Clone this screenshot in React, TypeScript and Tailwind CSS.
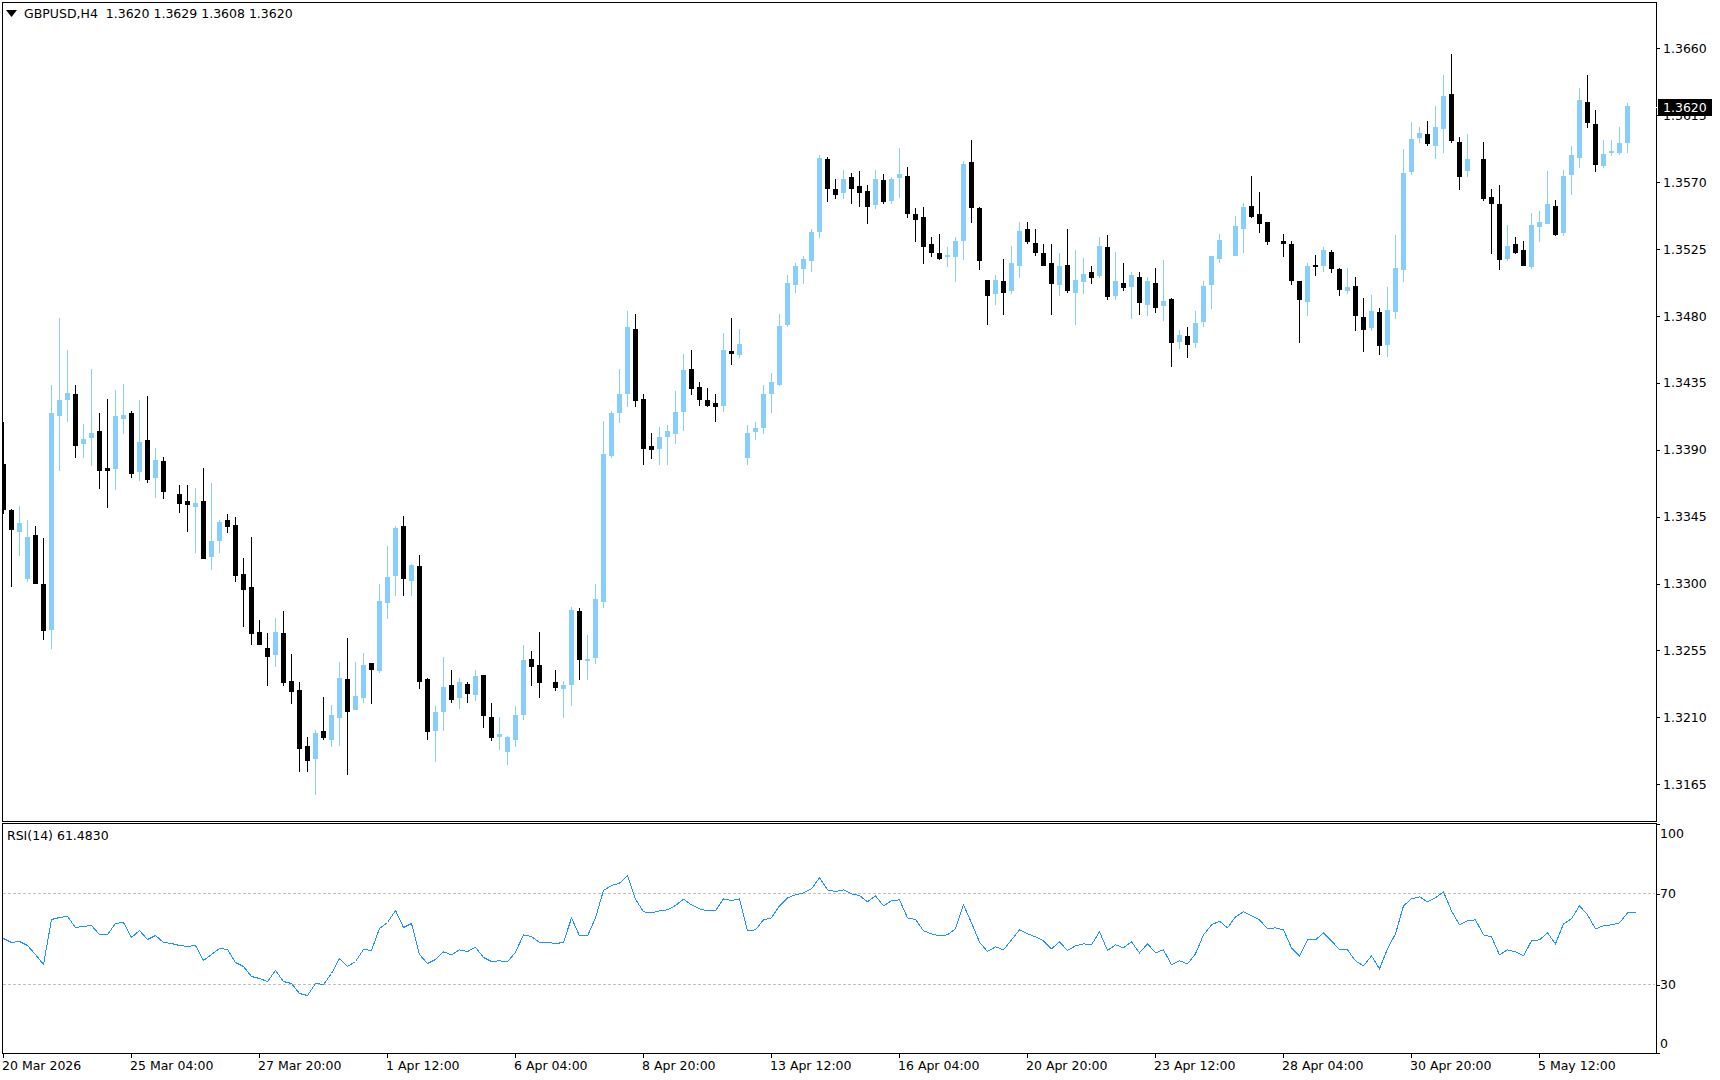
type Candle = [number, number, number, number, number] | null;

// [bull?, wick top, body top, body bottom, wick bottom], page pixels. null = no bar drawn
const CANDLES: Candle[] = [
  [0,422,464,510,514],[0,509,510,530,587],[1,506,523,532,556],[1,520,537,579,582],[0,526,535,584,584],[0,538,584,631,640],
  [1,385,413,630,649],[1,318,400,416,471],[1,350,393,400,422],[0,385,394,446,458],[1,424,439,444,458],[1,369,433,438,466],
  [0,413,431,471,489],[0,399,468,471,508],[1,390,416,469,490],[1,384,415,419,434],[0,411,413,474,478],[1,400,442,472,481],
  [0,396,440,480,483],[1,448,460,478,498],[0,457,461,492,499],null,[0,485,494,504,513],[0,485,501,505,532],
  [1,488,503,507,553],[0,468,501,559,559],[1,483,541,557,570],[1,520,522,541,553],[0,514,520,527,533],[0,517,525,576,582],
  [0,558,574,590,627],[0,537,587,634,645],[0,620,632,645,645],[0,633,648,657,686],[1,618,632,655,667],[0,611,633,683,686],
  [0,654,681,692,704],[0,682,690,749,772],[0,737,746,761,772],[1,730,733,759,795],[0,697,731,738,740],[1,705,715,740,747],
  [1,662,678,718,746],[0,638,679,712,775],[1,662,696,710,710],[1,653,665,698,703],[0,663,663,670,704],[1,584,601,671,673],
  [1,546,577,603,619],[1,526,528,576,596],[0,516,526,579,596],[1,564,565,581,596],[0,555,566,682,689],[0,678,679,732,740],
  [1,706,712,731,762],[1,657,687,712,731],[0,670,685,700,703],[1,678,682,698,709],[0,682,684,694,703],[1,670,676,695,701],
  [0,675,675,716,728],[0,703,717,738,741],[1,717,734,737,750],[1,736,737,752,765],[1,706,715,740,747],[1,645,660,715,720],
  [0,651,659,667,686],[0,632,665,683,698],null,[0,670,682,688,691],[1,681,685,689,718],[1,607,610,685,706],
  [0,608,611,660,680],[1,635,659,661,680],[1,584,599,658,664],[1,421,454,602,608],[1,411,413,456,458],[1,369,394,413,423],
  [1,311,327,394,407],[0,314,329,401,407],[0,394,399,449,465],[0,433,446,450,459],[1,427,437,449,465],[1,425,431,437,465],
  [1,391,412,434,444],[1,354,370,412,431],[0,350,369,389,395],[0,382,387,400,406],[0,388,400,406,407],[0,394,403,407,422],
  [1,333,350,406,412],[0,318,351,354,365],[1,329,344,355,358],[1,425,433,458,465],[1,422,428,432,440],[1,385,394,428,434],
  [1,373,382,394,413],[1,314,326,385,386],[1,275,283,325,327],[1,263,266,285,293],[1,256,259,269,284],[1,229,232,261,272],
  [1,155,158,232,238],[0,157,159,189,202],[0,179,189,195,199],[1,170,179,193,199],[0,173,177,189,204],[0,171,186,193,207],
  [0,185,191,207,224],[1,170,179,205,209],[0,174,180,202,204],[1,177,179,201,204],[1,148,174,178,198],[0,167,176,214,218],
  [0,208,214,220,242],[0,207,217,247,264],[0,237,244,253,257],[0,234,253,259,260],[1,247,255,257,267],[1,237,241,257,282],
  [1,161,164,241,260],[0,140,162,208,223],[0,207,208,261,270],[0,280,280,296,325],[1,275,280,294,305],[0,259,281,293,315],
  [1,246,263,291,294],[1,222,231,266,278],[0,222,229,242,244],[0,229,243,253,256],[0,244,253,266,266],[0,244,263,284,315],
  [1,253,266,285,296],[0,229,265,291,293],[1,250,280,293,325],[1,258,274,282,294],[0,266,272,278,284],[1,237,246,276,278],
  [0,235,247,297,300],[1,252,281,296,300],[0,263,283,288,291],[1,272,275,287,319],[0,272,277,303,315],[1,277,281,305,316],
  [0,268,283,308,313],[1,260,301,306,321],[0,298,299,343,367],[1,330,335,342,349],[0,327,336,345,358],[1,311,323,343,348],
  [1,281,286,322,327],[1,256,256,285,309],[1,234,240,259,263],null,[1,216,226,256,256],[1,203,207,229,253],
  [0,176,206,217,218],[0,192,214,224,233],[0,222,222,242,245],null,[0,234,241,244,257],[0,241,244,281,285],
  [0,281,281,300,343],[1,263,266,302,316],[0,255,265,267,276],[1,247,250,266,272],[0,250,252,269,273],[0,268,269,290,296],
  [1,268,287,291,294],[0,277,286,316,331],[0,298,317,330,352],[1,295,311,328,331],[0,308,312,346,355],[1,287,310,345,357],
  [1,235,268,312,319],[1,149,173,270,282],[1,122,139,172,175],[1,127,133,138,143],[0,121,134,144,146],[1,106,127,146,159],
  [1,75,96,129,153],[0,54,94,141,143],[0,137,142,177,190],[1,134,159,171,177],null,[0,142,159,199,201],
  [0,189,197,204,254],[0,185,204,260,270],[1,225,246,259,261],[0,237,244,253,254],[0,241,250,266,266],[1,213,225,267,269],
  [1,211,222,227,242],[1,171,204,224,224],[0,200,206,235,236],[1,170,176,233,236],[1,146,155,175,195],[1,88,100,158,168],
  [0,75,102,123,128],[0,110,124,165,172],[1,140,154,166,168],[1,140,151,153,156],[1,127,143,153,155],[1,103,106,143,153],
];

const RSI_LEFT = [
  938,942,941,945,954,964,919,917,916,927,926,925,934,934,923,922,937,930,939,935,942,943,945,946,945,960,954,948,
  949,962,966,976,978,981,970,981,983,993,995,983,984,973,958,966,961,949,950,928,922,910,927,923,954,963,
];
// traced from the zoomed crop, y = 860 + v / 3
const RSI_RIGHT = [
  297,274,283,268,273,260,291,303,301,304,275,223,228,246,246,249,246,172,226,226,172,90,75,68,46,116,154,157,151,148,
  135,116,133,145,151,151,115,120,115,211,208,178,172,136,112,103,97,85,52,88,93,88,100,105,124,106,136,121,118,172,
  177,211,220,226,223,205,133,187,245,273,259,268,238,208,220,229,241,265,244,270,256,250,253,214,270,253,262,244,277,250,
  277,268,313,301,310,280,223,193,182,202,169,154,166,178,205,202,208,262,286,238,238,217,241,268,268,301,316,286,325,265,
  220,136,115,109,124,112,94,151,193,181,178,223,229,283,268,274,286,241,238,217,250,190,175,136,163,205,196,193,187,157,157,
].map(v => 860 + v / 3);

const RSI_POINTS = [...RSI_LEFT, ...RSI_RIGHT].map((y, i) => `${3 + 8 * i + 0.5},${y + 0.5}`).join(' ');

const PRICES = ['1.3660', '1.3615', '1.3570', '1.3525', '1.3480', '1.3435', '1.3390', '1.3345', '1.3300', '1.3255', '1.3210', '1.3165'];
const TIMES = ['20 Mar 2026', '25 Mar 04:00', '27 Mar 20:00', '1 Apr 12:00', '6 Apr 04:00', '8 Apr 20:00', '13 Apr 12:00', '16 Apr 04:00', '20 Apr 20:00', '23 Apr 12:00', '28 Apr 04:00', '30 Apr 20:00', '5 May 12:00'];

function CandleChart() {
  return (
    <svg width={1652} height={818} viewBox="3 3 1652 818" shapeRendering="crispEdges" className="block">
      {CANDLES.map((c, i) => {
        if (!c) return null;
        const x = 3 + 8 * i;
        const color = c[0] ? '#87cefa' : '#000000';
        return (
          <g key={i} fill={color}>
            <rect x={x} y={c[1]} width={1} height={c[4] - c[1]} />
            <rect x={x - 2} y={c[2]} width={5} height={c[3] - c[2]} />
          </g>
        );
      })}
    </svg>
  );
}

function RsiChart() {
  return (
    <svg width={1652} height={229} viewBox="3 824 1652 229" shapeRendering="crispEdges" className="block">
      <line x1={3} x2={1655} y1={893.5} y2={893.5} stroke="#c0c0c0" strokeDasharray="3 2" />
      <line x1={3} x2={1655} y1={984.5} y2={984.5} stroke="#c0c0c0" strokeDasharray="3 2" />
      <polyline points={RSI_POINTS} fill="none" stroke="#1e90ff" strokeWidth={1} />
    </svg>
  );
}

export default function App() {
  return (
    <div className="w-[1720px] h-[1080px] overflow-hidden bg-white pl-[2px] pt-[2px] font-['DejaVu_Sans',sans-serif] text-[12.5px] leading-[14px] text-black">
      {/* Main chart */}
      <div className="flex">
        <div className="relative w-[1655px] h-[820px] border border-black shrink-0">
          <CandleChart />
          <div className="absolute left-[21px] top-[4px] whitespace-pre">GBPUSD,H4  1.3620 1.3629 1.3608 1.3620</div>
          <svg width={11} height={7} viewBox="0 0 11 7" className="absolute left-[3px] top-[7px]">
            <path d="M0 0h11L5.5 7z" fill="#000" />
          </svg>
        </div>
        <div className="relative flex-1 pt-[13.5px]">
          {PRICES.map(p => (
            <div key={p} className="flex h-[66.9px] items-center">
              <div className="w-[3px] h-px bg-black" />
              <span className="ml-[3px]">{p}</span>
            </div>
          ))}
          <div className="absolute -left-[1px] top-[105px] w-[3px] h-px bg-white" />
          <div className="absolute left-[1px] top-[97px] flex h-[17px] w-[54px] items-center bg-black pl-[5px] text-white">1.3620</div>
        </div>
      </div>

      {/* RSI */}
      <div className="mt-px flex">
        <div className="relative w-[1655px] h-[231px] border border-black shrink-0">
          <RsiChart />
          <div className="absolute left-[4px] top-[5px] whitespace-pre">RSI(14) 61.4830</div>
        </div>
        <div className="flex-1">
          <div className="mt-px w-[3px] h-px bg-black" />
          <div className="ml-[3px] mt-[2px] h-[14px]">100</div>
          <div className="mt-[46px] flex h-[14px] items-center">
            <div className="w-[3px] h-px bg-black" />
            <span>70</span>
          </div>
          <div className="mt-[77px] flex h-[14px] items-center">
            <div className="w-[3px] h-px bg-black" />
            <span>30</span>
          </div>
          <div className="ml-[3px] mt-[45px] h-[14px]">0</div>
          <div className="mt-[2px] w-[3px] h-px bg-black" />
        </div>
      </div>

      {/* Time axis */}
      <div className="flex pl-px">
        {TIMES.map(t => (
          <div key={t} className="w-[128px] shrink-0">
            <div className="w-px h-[4px] bg-black" />
            <div className="-ml-px mt-px whitespace-nowrap">{t}</div>
          </div>
        ))}
      </div>
    </div>
  );
}
